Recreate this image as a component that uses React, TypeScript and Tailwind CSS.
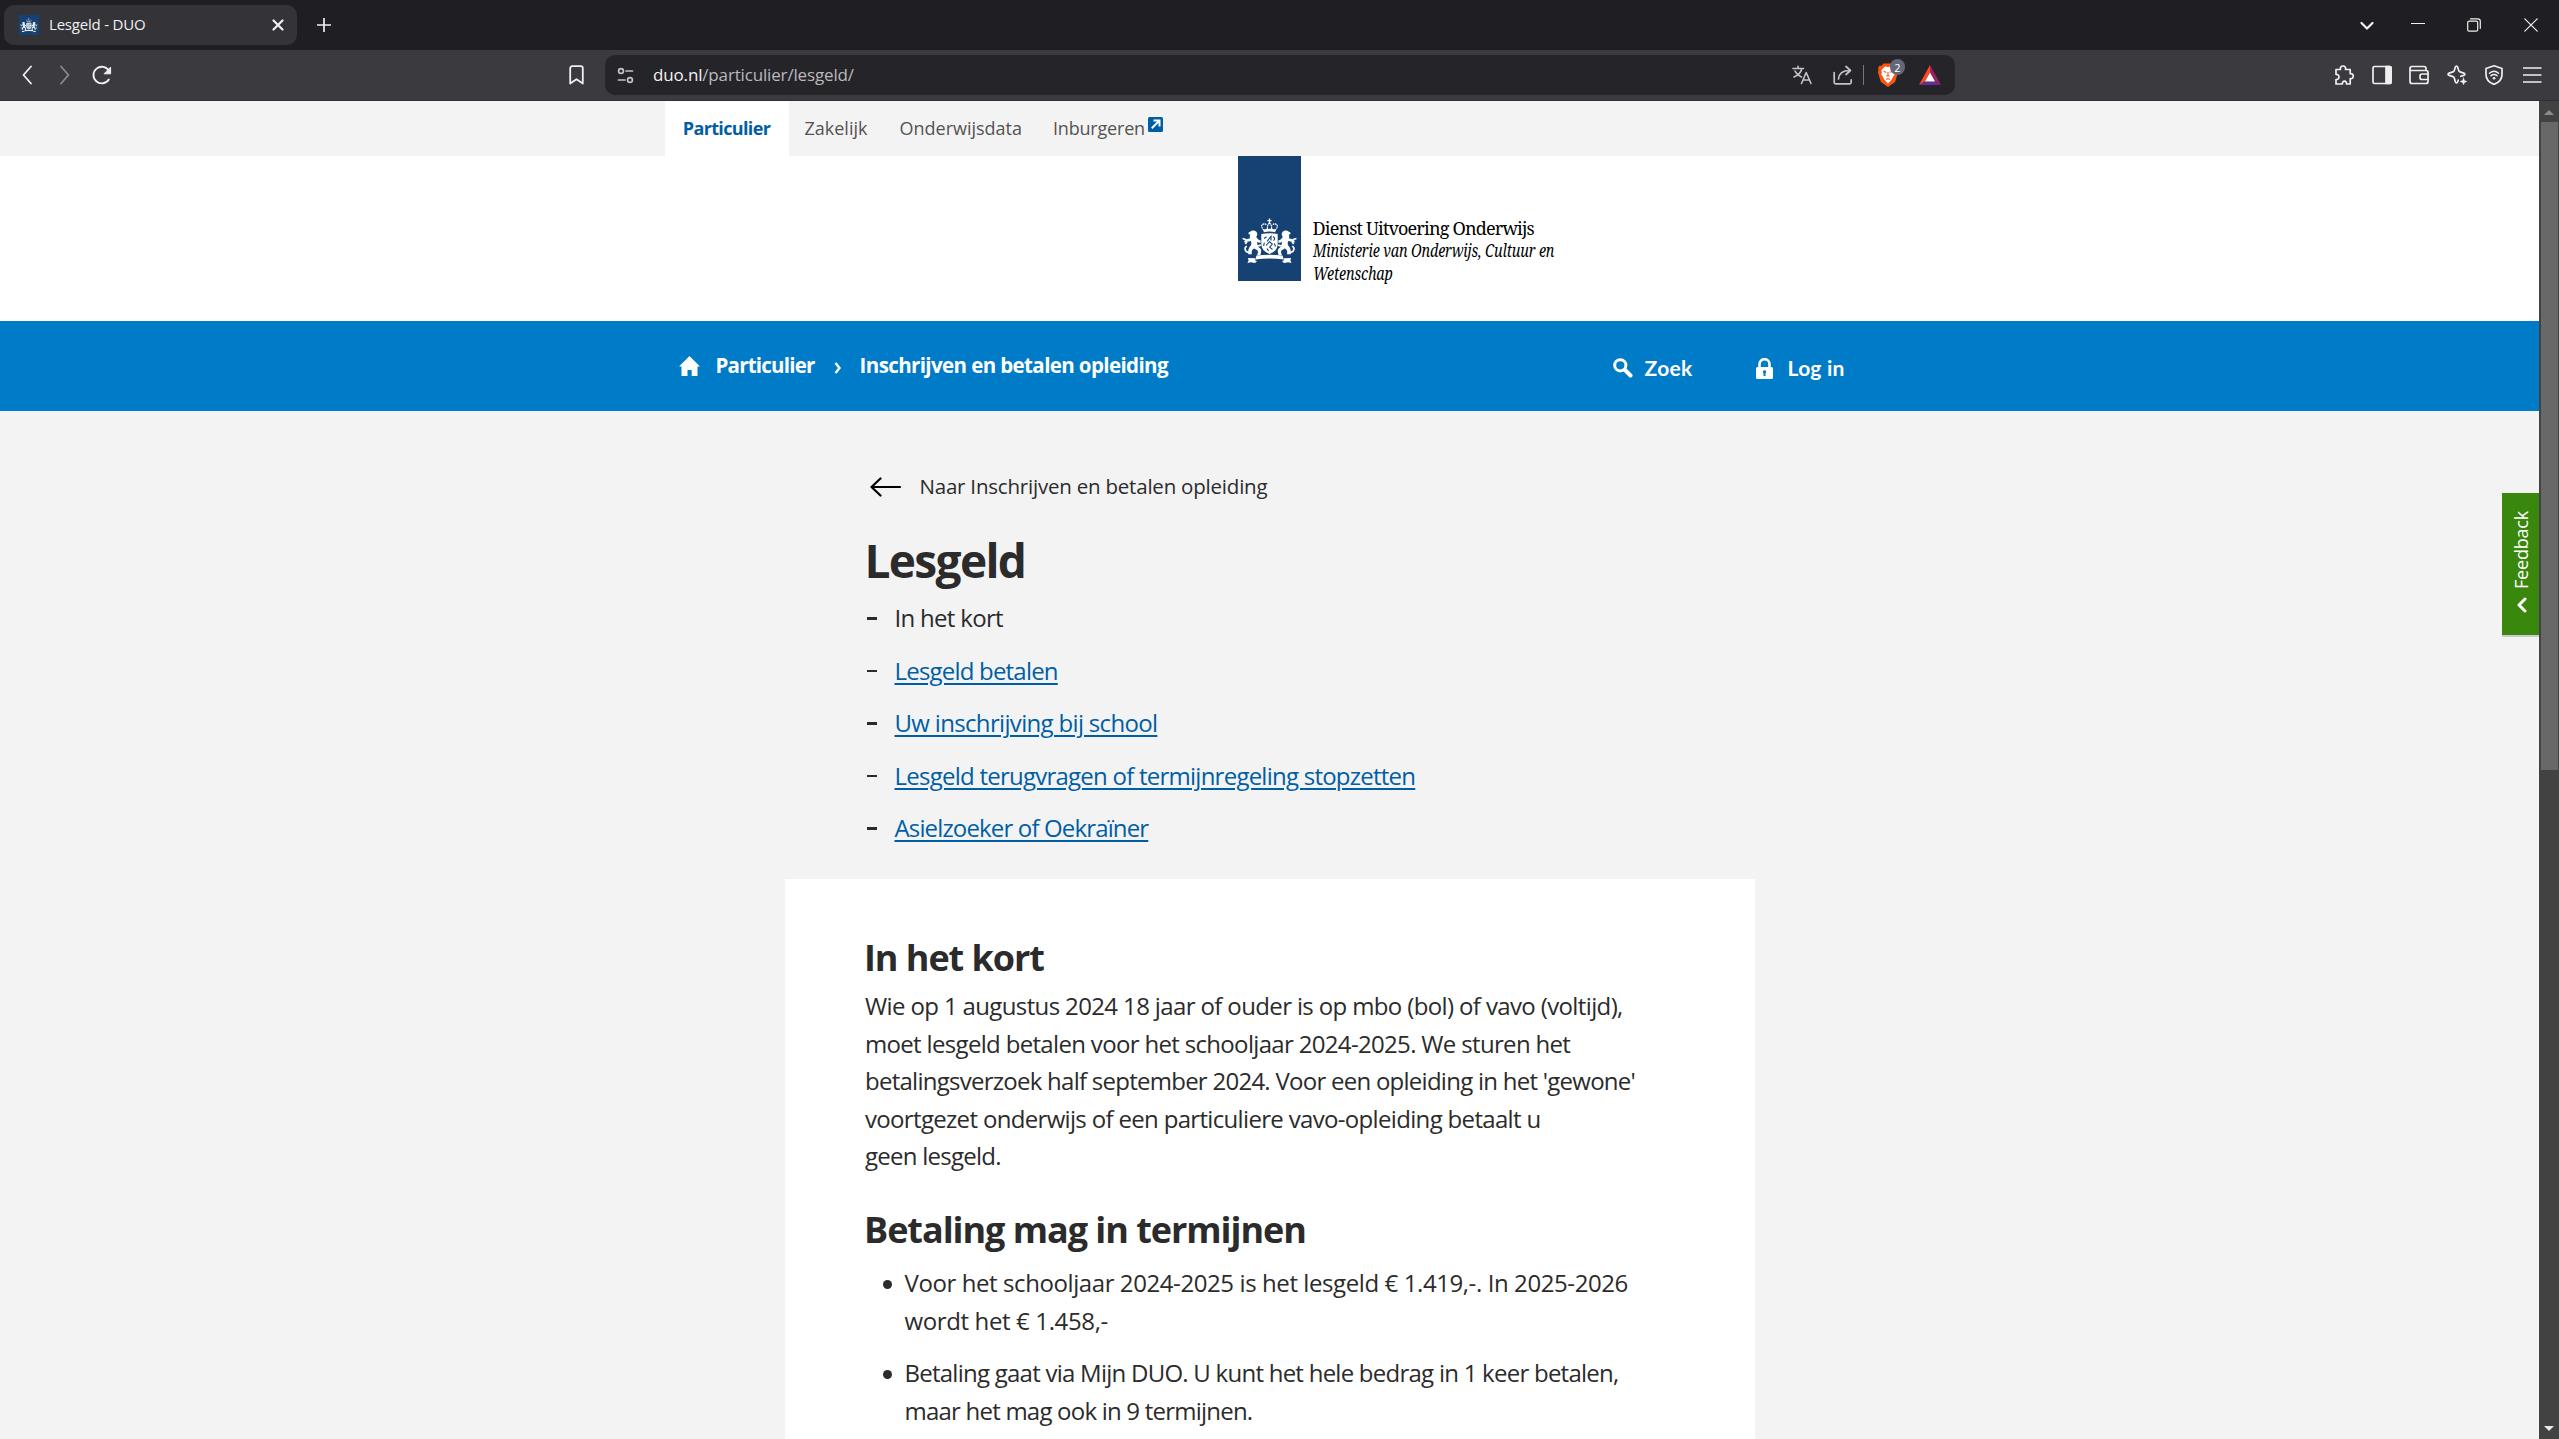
import type { ReactNode, SVGProps } from "react";

function Icon({ children, ...props }: SVGProps<SVGSVGElement>) {
  return (
    <svg fill="none" stroke="currentColor" strokeWidth="1.7" strokeLinecap="round" strokeLinejoin="round" {...props}>
      {children}
    </svg>
  );
}

function Arms({ className }: { className: string }) {
  return (
    <svg viewBox="0 0 56 46" className={className} fill="#fff">
      {/* crown */}
      <path d="M26.8 0.4h1.4v1.6h1.4v1.300h-1.4v1.800h-1.400V3.300h-1.400V2h1.400z" />
      <path
        d="M22 12.600c-2-2.400-3-4.800-1.600-6.200 1.400-1 3.400-.6 4.200.8M33 12.600c2-2.400 3-4.800 1.600-6.200-1.400-1-3.400-.6-4.200.8M27.500 5.200c-2 1-2.400 4-2 7M27.500 5.200c2 1 2.400 4 2 7"
        fill="none"
        stroke="#fff"
        strokeWidth="1.200"
        strokeDasharray="1.800 .5"
      />
      <path d="M21.300 11.400q6.200-1.500 12.400 0l-.6 2.800q-5.600-1.200-11.200 0z" />
      {/* shield */}
      <path d="M19.300 16q8.200-1.400 16.400 0v10.500q0 6.200-8.200 9.500-8.200-3.300-8.200-9.500z" />
      <g fill="none" stroke="#154273" strokeWidth="1.100">
        <path d="M22 20.500l2.500-1.800M25 23.500l4-5.200v4.200M31 18.600c2 1 2 3 .5 4M24 27.500l3.500-3.800 2.800 2.300-2.600 3.200 2.800 2.200M32.300 25.500l1.200 3M22.300 24.500l-.6 3.500M25 30.500l1.500 2.600" />
      </g>
      {/* lions */}
      {[false, true].map((flip) => (
        <g key={String(flip)} transform={flip ? "translate(55 0) scale(-1 1)" : undefined}>
          <path d="M8.500 13.500c1.500-1.400 4.600-1.200 6 .6 1.300 1.600.9 3.500-.3 4.800 1.600 1.500 2 3.200 4.500 3.600v2.300c-1.500.2-2.800-.2-3.700-.8.200 3.400 1.200 5.300 3.600 6.700 1.300 1.800.3 4.200-.2 6.300l-3.400.2c.9-2 1.300-3.500.6-4.700l-3.400-1.900c-1.600.7-3 2-2.300 5.600l-3.700.1c-.5-3.800.6-6.700 2.400-8.500 1-1.500.8-3.300.2-4.900l-3.500.8-2.600 1-.5-1.800 3-1.900 3-.8c-.7-1.200-.6-2.600.2-3.500l-2-.8.300-1.500z" />
          <path
            d="M6.500 34.500c-4.200-1-4.400-5.300-1.600-6.300M.6 20.500l3.800 1.300M5 23.800l-1.700 2.200M12 27.500c3 .5 5 .5 7-.5"
            fill="none"
            stroke="#fff"
            strokeWidth="1.600"
          />
        </g>
      ))}
      {/* ribbon */}
      <path d="M14.500 37.400q13-1.400 26 0l1.300 4q-14.300-1.600-28.600 0z" />
      <path d="M6 40l7 .3.300 2.200 1.700.8-2 1.700-4.300-.7-3.300.7 1.200-2.200zM49 40l-7 .3-.3 2.200-1.700.8 2 1.700 4.300-.7 3.300.7-1.200-2.200z" />
    </svg>
  );
}

function BrowserChrome() {
  return (
    <div className="text-[#f0f0f2]">
      <div className="flex h-[50px] items-center bg-[#1f1e23] pl-1">
        <div className="flex h-10 w-[293px] items-center rounded-[10px] bg-[#343338] pl-[15px] pr-[13px]">
          <div className="flex size-5 items-center justify-center bg-[#154273]">
            <Arms className="w-[18px] opacity-90" />
          </div>
          <span className="-mt-px ml-[10px] flex-1 text-[15px] tracking-[-0.200px]">Lesgeld - DUO</span>
          <Icon viewBox="0 0 12 12" className="size-3" strokeWidth="2.200">
            <path d="M1.500 1.500l9 9M10.500 1.500l-9 9" />
          </Icon>
        </div>
        <Icon viewBox="0 0 14 14" className="ml-5 size-[14px]">
          <path d="M7 0.500v13M0.500 7h13" />
        </Icon>
        <div className="ml-auto flex items-center pr-[21px]">
          <Icon viewBox="0 0 14 10" className="mt-0.5 h-[10px] w-[14px]" strokeWidth="2.200">
            <path d="M1.500 2l5.500 5.500L12.500 2" />
          </Icon>
          <Icon viewBox="0 0 14 14" className="ml-[37px] size-[14px]" strokeWidth="1.200">
            <path d="M0.500 5.500h13" />
          </Icon>
          <Icon viewBox="0 0 14 14" className="ml-[42px] size-[14px]" strokeWidth="1.200">
            <rect x="0.700" y="3.200" width="10" height="10" rx="1.500" />
            <path d="M3.500 0.800h7.300a2.500 2.500 0 012.500 2.500v7" />
          </Icon>
          <Icon viewBox="0 0 14 14" className="ml-[43px] size-[14px]" strokeWidth="1.200">
            <path d="M0.800 0.800l12.400 12.400M13.200 0.800L0.800 13.200" />
          </Icon>
        </div>
      </div>
      <div className="flex h-[51px] items-center border-b border-[#302f34] bg-[#3b3a3f] pr-[17px]">
        <Icon viewBox="0 0 10 20" className="ml-[22px] h-5 w-[10px]" strokeWidth="1.800">
          <path d="M9 1.500L1.500 10 9 18.500" />
        </Icon>
        <Icon viewBox="0 0 10 20" className="ml-7 h-5 w-[10px] text-[#89888d]" strokeWidth="1.800">
          <path d="M1 1.500L8.500 10 1 18.500" />
        </Icon>
        <Icon viewBox="0 0 20 20" className="ml-[22px] size-5" strokeWidth="1.900">
          <path d="M16.800 14.500A8.300 8.300 0 1117 6" />
          <path d="M18.600 2.500v6.300h-6.200z" fill="currentColor" strokeWidth="1" />
        </Icon>
        <Icon viewBox="0 0 15 20" className="ml-[457px] h-5 w-[15px]" strokeWidth="1.800">
          <path d="M1.200 3.200a2 2 0 012-2h8.600a2 2 0 012 2v15.300l-6.300-4.300-6.300 4.300z" />
        </Icon>
        <div className="ml-[21px] flex h-10 w-[1350px] items-center rounded-[10px] bg-[#252429] pl-[12px] pr-[13px] text-[#c3c3c8]">
          <Icon viewBox="0 0 17 17" className="size-[17px]" strokeWidth="1.700">
            <circle cx="4" cy="4" r="2.400" />
            <path d="M9 4h6.500M1.500 13h6.500" />
            <circle cx="13" cy="13" r="2.400" />
          </Icon>
          <span className="ml-[19px] flex-1 text-[17px] tracking-[-0.160px] text-[#b9b9be]">
            <span className="text-[#f2f2f4]">duo.nl</span>/particulier/lesgeld/
          </span>
          <Icon viewBox="0 0 20 20" className="size-5" strokeWidth="1.600">
            <path d="M1 3.500h10.500M6 1.200v2.300M9.800 3.500C9 7.500 5.500 10.500 2 12M3 6c1.500 3 4 5 6.500 6" />
            <path d="M9.500 18.500L14.200 7.500l4.800 11M11.200 15h6" />
          </Icon>
          <Icon viewBox="0 0 20 20" className="ml-[21px] size-5" strokeWidth="1.700">
            <path d="M1.200 7.500v9.800a1.500 1.500 0 001.500 1.500h14a1.500 1.500 0 001.500-1.500v-2.500" />
            <path d="M5.500 14C6 8.500 9.500 5.500 16.500 5.500M13 1.500l4.500 4-4.500 4" />
          </Icon>
          <div className="ml-[10px] h-5 w-px bg-[#77767c]" />
          <div className="relative ml-[13px] flex">
            <svg viewBox="0 0 22 24" className="h-6 w-[22px]">
              <path d="M6.500 0.500h9l2 2.300 1.800-.2 1.700 2.400-.6 2 .7 2.200-3 9.800-7.100 5-7.100-5-3-9.800.7-2.200-.6-2 1.700-2.400 1.800.2z" fill="#fb5410" />
              <path d="M11 4l3.200-.6 3.500 3.800-.6 2.600.7 1.500-2.100 3.300-1.300 2.500-3.400 3.400-3.400-3.400-1.300-2.500-2.100-3.300.7-1.500-.6-2.600 3.500-3.800z" fill="#fff" />
              <path d="M6.500 8.500l2.800.8M15.500 8.500l-2.800.8M11 9v3.500M9.300 13.300l1.700-.8 1.700.8M9.200 16.600l1.800-1 1.800 1" stroke="#fb5410" strokeWidth="1.100" fill="none" />
            </svg>
            <span className="absolute -top-[4px] left-[13px] flex h-4 w-[15px] items-center justify-center rounded-full bg-[#636878] text-[11px] leading-none text-white">
              2
            </span>
          </div>
          <svg viewBox="0 0 24 21" className="ml-[19px] h-[21px] w-6">
            <path d="M12 0L1 20l6-3.500 5-9z" fill="#ff4724" />
            <path d="M12 0l11 20-6-3.500-5-9z" fill="#9e1f63" />
            <path d="M1 20h22l-6-3.500H7z" fill="#662d91" />
            <path d="M12 7.500l5 9H7z" fill="#fff" />
          </svg>
        </div>
        <div className="ml-auto flex items-center gap-[17.600px]">
          <Icon viewBox="0 0 20 20" className="size-5">
            <path d="M2 4.500h4.500c-.5-2 .5-3.500 2.500-3.500s3 1.500 2.500 3.500h4.700v4.200c2-.3 3 .8 3 2.500s-1 2.800-3 2.500V19h-3.700c.2-1.800-.6-2.800-2-2.800s-2.300 1-2.100 2.800H2v-4.500c2 .2 3-.8 3-2.500S4 9.300 2 9.500z" />
          </Icon>
          <Icon viewBox="0 0 20 20" className="size-5">
            <rect x="1" y="1.500" width="18" height="17" rx="1.500" />
            <path d="M14 1.500h4a1 1 0 011 1v15a1 1 0 01-1 1h-4z" fill="currentColor" />
          </Icon>
          <Icon viewBox="0 0 20 20" className="size-5">
            <path d="M1 4v12.500a2 2 0 002 2h14a2 2 0 002-2v-9a2 2 0 00-2-2H3A1.800 1.800 0 011 3.500a2 2 0 012-2h12a2 2 0 012 2v2" />
            <path d="M19 9h-6a2 2 0 00-2 2v1.500a2 2 0 002 2h6" />
          </Icon>
          <Icon viewBox="0 0 20 20" className="size-5">
            <path d="M9.500 1c.6 0 1 .5 1.200 1.200l1 3.300c.2.700.7 1.200 1.400 1.400l3.600 1.200c1.500.5 1.500 1.800 0 2.300l-3 .9M9.500 1c-.6 0-1 .5-1.200 1.200l-1 3.300c-.2.700-.7 1.200-1.400 1.400L2.200 8.100c-1.500.5-1.500 1.800 0 2.300l3.700 1.200c.7.200 1.200.7 1.400 1.400l1 3.800c.5 1.500 1.900 1.500 2.400 0l.5-1.800" />
            <path d="M16.500 12.800l1 2.700 2.500 1-2.500 1-1 2.300-1-2.300-2.500-1 2.500-1z" fill="currentColor" strokeWidth=".4" />
          </Icon>
          <Icon viewBox="0 0 20 20" className="size-5">
            <path d="M10 .8l8 2.700v6c0 4.500-3 8-8 9.900-5-1.900-8-5.400-8-9.900v-6z" />
            <path d="M5.500 8.200c2.700-2.300 6.300-2.300 9 0M7 10.700c1.800-1.500 4.200-1.500 6 0" strokeWidth="1.500" />
            <circle cx="10" cy="13.300" r="1" fill="currentColor" strokeWidth=".8" />
          </Icon>
          <Icon viewBox="0 0 20 20" className="size-5" strokeLinecap="butt">
            <path d="M1 3h18.500M1 10h18.500M1 17h18.500" />
          </Icon>
        </div>
      </div>
    </div>
  );
}

function TopNav() {
  return (
    <nav className="h-[55px] bg-[#f3f3f3]">
      <div className="mx-auto flex h-full w-[1210px] items-center pb-0.5 text-lg text-[#535353]">
        <a className="-mb-0.5 flex h-[55px] w-[124px] items-center justify-center bg-white pb-0.5 font-bold tracking-[-0.650px] text-[#005ea5]">
          Particulier
        </a>
        <a className="ml-4">Zakelijk</a>
        <a className="ml-8">Onderwijsdata</a>
        <a className="ml-[31px] flex tracking-[-0.200px]">
          Inburgeren
          <svg viewBox="0 0 15 15" className="ml-[3px] mt-[3px] size-[15px]">
            <rect width="15" height="15" rx="1.500" fill="#005ea5" />
            <path d="M5.500 3.500h6v6M11.200 3.800L3.800 11.200" stroke="#fff" strokeWidth="2" fill="none" />
          </svg>
        </a>
      </div>
    </nav>
  );
}

function Header() {
  return (
    <header className="h-[165px] bg-white">
      <div className="mx-auto flex w-[1210px] pl-[573px]">
        <div className="flex h-[125px] w-[63px] justify-center bg-[#154273] pl-px pt-[62px]">
          <Arms className="h-[46px] w-[56px]" />
        </div>
        <div className="ml-3 whitespace-nowrap pt-[61px] font-['Noto_Serif'] text-lg leading-[22.300px] text-black">
          <div className="tracking-[-0.830px]">Dienst Uitvoering Onderwijs</div>
          <div className="origin-left scale-x-[0.8] italic tracking-[-0.200px]">Ministerie van Onderwijs, Cultuur en</div>
          <div className="origin-left scale-x-[0.8] italic tracking-[-0.200px]">Wetenschap</div>
        </div>
      </div>
    </header>
  );
}

function BlueBar() {
  return (
    <div className="h-[90px] bg-[#007bc7] text-white">
      <div className="mx-auto flex h-full w-[1210px] items-center pl-[14px] text-[20.5px]">
        <svg viewBox="0 0 21 20" className="h-5 w-[21px]" fill="#fff">
          <path d="M10.500 0L21 10.500h-2.500V20h-5.800v-6H8.500v6H2.500v-9.500H0z" />
        </svg>
        <a className="ml-4 font-bold tracking-[-0.780px]">Particulier</a>
        <Icon viewBox="0 0 8 12" className="ml-[19px] mt-1 h-3 w-2" strokeWidth="2.400" strokeLinecap="butt" strokeLinejoin="miter">
          <path d="M1.500 1l4 5-4 5" />
        </Icon>
        <a className="ml-[18px] font-bold tracking-[-0.610px]">Inschrijven en betalen opleiding</a>
        <div className="ml-auto mt-1 flex items-center pr-[30px] font-['Lato'] text-[21px] font-bold">
          <Icon viewBox="0 0 20 20" className="size-5" strokeWidth="3">
            <circle cx="7.300" cy="7.300" r="5.600" />
            <path d="M12 12l5.500 5.500" strokeWidth="4" />
          </Icon>
          <span className="ml-3 tracking-[0.300px]">Zoek</span>
          <svg viewBox="0 0 17 21" className="ml-[63px] h-[21px] w-[17px]">
            <path d="M3.500 10V6.200a5 5 0 0110 0V10" stroke="#fff" strokeWidth="2.600" fill="none" />
            <rect y="9" width="17" height="12" rx="1.500" fill="#fff" />
            <path d="M8.500 12.300a1.600 1.600 0 011 2.900v2.800h-2v-2.800a1.600 1.600 0 011-2.900z" fill="#007bc7" />
          </svg>
          <span className="ml-[15px] tracking-[0.200px]">Log in</span>
        </div>
      </div>
    </div>
  );
}

const toc = [
  { text: "Lesgeld betalen", tracking: "tracking-[-0.800px]", dash: "h-[2px]" },
  { text: "Uw inschrijving bij school", tracking: "tracking-[-0.670px]", dash: "h-[3px]" },
  { text: "Lesgeld terugvragen of termijnregeling stopzetten", tracking: "tracking-[-0.755px]", dash: "h-[2px]" },
  { text: "Asielzoeker of Oekraïner", tracking: "tracking-[-0.850px]", dash: "h-[3px]" },
];

function Intro() {
  return (
    <section className="mx-auto h-[468px] w-[806px] pt-[57px]">
      <a className="flex h-[38px] items-center pl-[3px] text-[20.5px] tracking-[-0.210px]">
        <Icon viewBox="0 0 31 20" className="mr-[19px] h-5 w-[31px] text-black" strokeWidth="2.200">
          <path d="M10.500 1.500L1.500 10l9 8.500M1.500 10H30" />
        </Icon>
        Naar Inschrijven en betalen opleiding
      </a>
      <h1 className="-ml-0.5 mt-[23px] h-[63px] text-[46px] font-bold leading-[62px] tracking-[-1.650px]">Lesgeld</h1>
      <ul>
        <li className="flex h-[52.500px] items-center">
          <span className="mr-[18px] h-[3px] w-[10px] bg-[#2b2b2b]" />
          <span className="tracking-[-0.700px]">In het kort</span>
        </li>
        {toc.map(({ text, tracking, dash }) => (
          <li key={text} className="flex h-[52.500px] items-center">
            <span className={`mr-[18px] w-[10px] bg-[#2b2b2b] ${dash}`} />
            <a className={`text-[#005ea5] underline decoration-2 underline-offset-[3px] ${tracking}`}>{text}</a>
          </li>
        ))}
      </ul>
    </section>
  );
}

function Bullet({ children }: { children: ReactNode }) {
  return (
    <li className="mb-[14.500px] flex">
      <span className="ml-[17px] mr-[13px] mt-[16px] size-[9px] shrink-0 rounded-full bg-[#2b2b2b]" />
      <div>{children}</div>
    </li>
  );
}

function Article() {
  return (
    <article className="mx-auto h-[620px] w-[970px] overflow-hidden whitespace-nowrap bg-white pl-[80.500px] pt-[54px]">
      <h2 className="-ml-px h-[54px] text-[36px] font-bold leading-[49px] tracking-[-1.050px]">In het kort</h2>
      <p className="leading-[37.500px]">
        <span className="block tracking-[-0.630px]">Wie op 1 augustus 2024 18 jaar of ouder is op mbo (bol) of vavo (voltijd),</span>
        <span className="block tracking-[-0.670px]">moet lesgeld betalen voor het schooljaar 2024-2025. We sturen het</span>
        <span className="block tracking-[-0.740px]">betalingsverzoek half september 2024. Voor een opleiding in het 'gewone'</span>
        <span className="block tracking-[-0.670px]">voortgezet onderwijs of een particuliere vavo-opleiding betaalt u</span>
        <span className="block tracking-[-0.750px]">geen lesgeld.</span>
      </p>
      <h2 className="-ml-px mt-[30px] h-[59px] text-[36px] font-bold leading-[49px] tracking-[-1.050px]">
        Betaling mag in termijnen
      </h2>
      <ul className="ml-[0.500px] leading-[38px]">
        <Bullet>
          <div className="tracking-[-0.410px]">Voor het schooljaar 2024-2025 is het lesgeld € 1.419,-. In 2025-2026</div>
          <div className="tracking-[-0.370px]">wordt het € 1.458,-</div>
        </Bullet>
        <Bullet>
          <div className="tracking-[-0.750px]">Betaling gaat via Mijn DUO. U kunt het hele bedrag in 1 keer betalen,</div>
          <div className="tracking-[-0.780px]">maar het mag ook in 9 termijnen.</div>
        </Bullet>
      </ul>
    </article>
  );
}

export default function App() {
  return (
    <div className="flex h-[1439px] w-[2559px] flex-col overflow-hidden font-['Open_Sans',sans-serif]">
      <BrowserChrome />
      <div className="flex min-h-0 flex-1">
        <main className="relative flex-1 overflow-hidden bg-[#f3f3f3] text-2xl text-[#2b2b2b]">
          <TopNav />
          <Header />
          <BlueBar />
          <Intro />
          <Article />
          <button className="absolute right-0 top-[392px] flex h-[144px] w-[37px] flex-col items-center border-b-2 border-[#cbcbcb] bg-[#39870c] pt-[18px] text-lg text-white">
            <span className="rotate-180 leading-[35px] tracking-[-0.200px] pl-[2px] -mr-[4px] [writing-mode:vertical-rl]">Feedback</span>
            <Icon viewBox="0 0 10 16" className="ml-0.5 mt-2 h-4 w-[10px]" strokeWidth="3">
              <path d="M8 2L2 8l6 6" />
            </Icon>
          </button>
        </main>
        <div className="flex w-5 flex-col items-center bg-[#424242]">
          <div className="flex h-[21px] items-center pt-0.5">
            <svg viewBox="0 0 10 5" className="h-[5px] w-[10px]" fill="#8b8b8b">
              <path d="M5 0l5 5H0z" />
            </svg>
          </div>
          <div className="h-[648px] w-[17px] bg-[#686868]" />
          <svg viewBox="0 0 10 5" className="mb-2 mt-auto h-[5px] w-[10px]" fill="#e8e8e8">
            <path d="M5 5L0 0h10z" />
          </svg>
        </div>
      </div>
    </div>
  );
}
